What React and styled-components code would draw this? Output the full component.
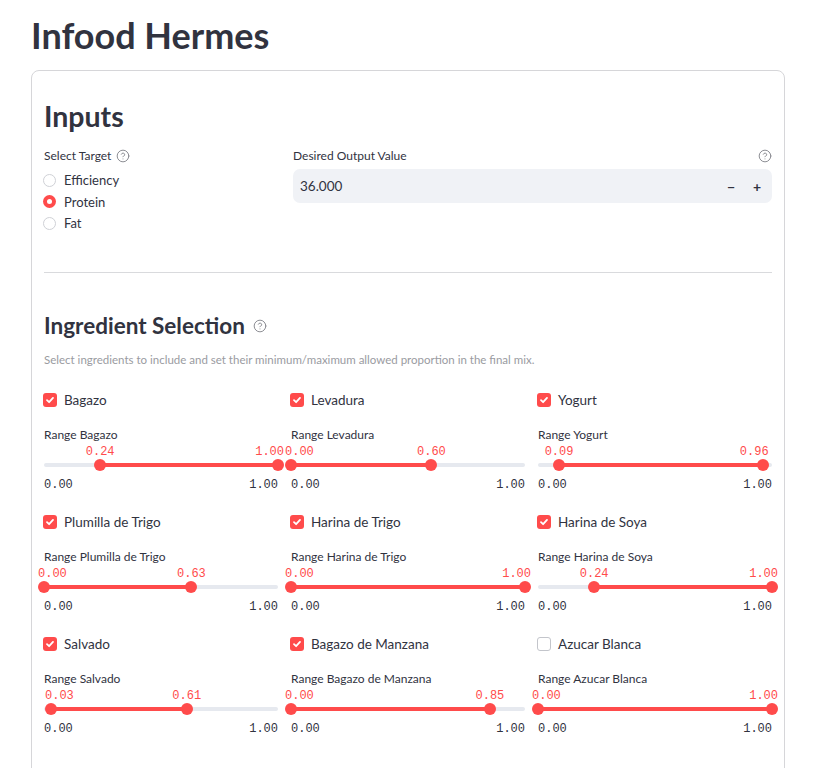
import React from 'react'
import styled, { createGlobalStyle, css } from 'styled-components'
import { CircleHelp } from 'lucide-react'

const GlobalStyle = createGlobalStyle`
  body {
    margin: 0;
    background: #ffffff;
    color: #31333f;
    font-family: Lato, "Noto Sans", sans-serif;
  }
`

const Page = styled.div`
  width: 754px;
  padding: 13px 0 0 31px;
`

const Title = styled.h1`
  margin: 0;
  font-size: 36px;
  line-height: 44px;
  font-weight: 700;
  color: #31333f;
`

const Card = styled.div`
  margin-top: 13px;
  border: 1px solid #d6d6d9;
  border-radius: 8px;
  padding: 12px 12px 40px;
`

const Header = styled.h2`
  margin: 15px 0 0;
  font-size: 28.5px;
  line-height: 36px;
  font-weight: 700;
`

const InputsGrid = styled.div`
  display: grid;
  grid-template-columns: 233fr 479fr;
  gap: 16px;
  margin-top: 14px;
`

const WidgetLabel = styled.div`
  display: flex;
  align-items: center;
  gap: 5px;
  font-size: 12px;
  line-height: 16px;
  height: 16px;

  ${props => props.spread && css`
    justify-content: space-between;
  `}
`

const Help = styled(CircleHelp)`
  color: #84858c;
  flex: none;
`

const RadioList = styled.div`
  margin-top: 5.5px;
  display: flex;
  flex-direction: column;
`

const RadioOption = styled.div`
  display: flex;
  align-items: center;
  height: 21.5px;
  font-size: 13px;
`

const RadioDot = styled.span`
  width: 13px;
  height: 13px;
  box-sizing: border-box;
  border-radius: 50%;
  margin: 0 8px 0 -1px;
  border: 1px solid #cfd1d6;
  background: #ffffff;
  display: flex;
  align-items: center;
  justify-content: center;

  ${props => props.checked && css`
    border: none;
    background: #ff4b4b;
    &::after {
      content: '';
      width: 5px;
      height: 5px;
      border-radius: 50%;
      background: #ffffff;
    }
  `}
`

const NumberBox = styled.div`
  margin-top: 5px;
  height: 34px;
  background: #f0f2f6;
  border-radius: 7px;
  display: flex;
  align-items: center;
  padding: 0 2px 0 7px;
  font-size: 13.5px;
`

const NumberValue = styled.span`
  flex: 1;
`

const StepButton = styled.span`
  width: 26px;
  text-align: center;
  font-size: 14px;
  font-weight: 700;
  color: #31333f;
`

const Divider = styled.hr`
  margin: 38px 0 0;
  border: none;
  border-top: 1px solid #d9dadd;
`

const SubHeader = styled.h3`
  margin: 38px 0 0;
  font-size: 22.5px;
  line-height: 30px;
  font-weight: 700;
  display: flex;
  align-items: center;
  gap: 8px;
`

const Caption = styled.p`
  margin: 11px 0 0;
  font-size: 11.5px;
  line-height: 16px;
  color: #9a9ba1;
`

const IngredientGrid = styled.div`
  margin-top: 21px;
  display: grid;
  grid-template-columns: repeat(3, 1fr);
  column-gap: 13px;
  row-gap: 18px;
`

const Cell = styled.div`
  display: flex;
  flex-direction: column;
`

const CheckRow = styled.label`
  display: flex;
  align-items: center;
  height: 22px;
  font-size: 13.5px;
`

const CheckBox = styled.span`
  width: 14px;
  height: 14px;
  box-sizing: border-box;
  border-radius: 3px;
  margin: 0 7px 0 -1px;
  display: flex;
  align-items: center;
  justify-content: center;
  border: 1px solid #c3c5cb;
  background: #ffffff;

  ${props => props.checked && css`
    border: none;
    background: #ff4b4b;
  `}
`

const SliderLabel = styled.div`
  margin-top: 16px;
  font-size: 12px;
  line-height: 16px;
`

const ValueRow = styled.div`
  position: relative;
  margin-top: 1px;
  height: 15px;
`

const ThumbValue = styled.span`
  position: absolute;
  top: 0;
  font-family: "Liberation Mono", "DejaVu Sans Mono", monospace;
  font-size: 12px;
  line-height: 16px;
  color: #ff4b4b;
  white-space: nowrap;
  transform: translateX(-50%);

  ${props => props.align === 'left' && css`
    transform: translateX(-6px);
  `}
  ${props => props.align === 'right' && css`
    transform: translateX(calc(-100% + 6px));
  `}
`

const Track = styled.div`
  position: relative;
  height: 12px;

  &::before {
    content: '';
    position: absolute;
    left: 0;
    right: 0;
    top: 4px;
    height: 4px;
    border-radius: 2px;
    background: #e6e9ef;
  }
`

const Fill = styled.div`
  position: absolute;
  top: 4px;
  height: 4px;
  background: #ff4b4b;
`

const Thumb = styled.span`
  position: absolute;
  top: 0;
  width: 12px;
  height: 12px;
  border-radius: 50%;
  background: #ff4b4b;
  transform: translateX(-50%);
`

const Ticks = styled.div`
  margin-top: 6px;
  display: flex;
  justify-content: space-between;
  font-family: "Liberation Mono", "DejaVu Sans Mono", monospace;
  font-size: 12px;
  line-height: 16px;
  color: #31333f;
`

const ingredients = [
  { name: 'Bagazo', checked: true, lo: 0.24, hi: 1.0 },
  { name: 'Levadura', checked: true, lo: 0.0, hi: 0.6 },
  { name: 'Yogurt', checked: true, lo: 0.09, hi: 0.96 },
  { name: 'Plumilla de Trigo', checked: true, lo: 0.0, hi: 0.63 },
  { name: 'Harina de Trigo', checked: true, lo: 0.0, hi: 1.0 },
  { name: 'Harina de Soya', checked: true, lo: 0.24, hi: 1.0 },
  { name: 'Salvado', checked: true, lo: 0.03, hi: 0.61 },
  { name: 'Bagazo de Manzana', checked: true, lo: 0.0, hi: 0.85 },
  { name: 'Azucar Blanca', checked: false, lo: 0.0, hi: 1.0 }
]

const targets = [
  { label: 'Efficiency', checked: false },
  { label: 'Protein', checked: true },
  { label: 'Fat', checked: false }
]

// value labels stick to the thumb edge when centring would spill out of the column
const alignFor = v => {
  if (v < 0.062) return 'left'
  if (v > 0.938) return 'right'
  return 'center'
}

const Check = () => (
  <svg width="10" height="10" viewBox="0 0 10 10">
    <path d="M2 5.2 L4.1 7.2 L8 2.9" fill="none" stroke="#ffffff" strokeWidth="1.8" strokeLinecap="round" strokeLinejoin="round" />
  </svg>
)

const RangeSlider = ({ label, lo, hi }) => (
  <>
    <SliderLabel>{label}</SliderLabel>
    <ValueRow>
      <ThumbValue align={alignFor(lo)} style={{ left: `${lo * 100}%` }}>{lo.toFixed(2)}</ThumbValue>
      <ThumbValue align={alignFor(hi)} style={{ left: `${hi * 100}%` }}>{hi.toFixed(2)}</ThumbValue>
    </ValueRow>
    <Track>
      <Fill style={{ left: `${lo * 100}%`, width: `${(hi - lo) * 100}%` }} />
      <Thumb style={{ left: `${lo * 100}%` }} />
      <Thumb style={{ left: `${hi * 100}%` }} />
    </Track>
    <Ticks>
      <span>0.00</span>
      <span>1.00</span>
    </Ticks>
  </>
)

const Ingredient = ({ name, checked, lo, hi }) => (
  <Cell>
    <CheckRow>
      <CheckBox checked={checked}>{checked && <Check />}</CheckBox>
      {name}
    </CheckRow>
    <RangeSlider label={`Range ${name}`} lo={lo} hi={hi} />
  </Cell>
)

export default function App() {
  return (
    <Page>
      <GlobalStyle />
      <Title>Infood Hermes</Title>
      <Card>
        <Header>Inputs</Header>
        <InputsGrid>
          <div>
            <WidgetLabel>
              Select Target <Help size={14} strokeWidth={1.6} />
            </WidgetLabel>
            <RadioList>
              {targets.map(t => (
                <RadioOption key={t.label}>
                  <RadioDot checked={t.checked} />
                  {t.label}
                </RadioOption>
              ))}
            </RadioList>
          </div>
          <div>
            <WidgetLabel spread>
              Desired Output Value <Help size={14} strokeWidth={1.6} />
            </WidgetLabel>
            <NumberBox>
              <NumberValue>36.000</NumberValue>
              <StepButton>−</StepButton>
              <StepButton>+</StepButton>
            </NumberBox>
          </div>
        </InputsGrid>
        <Divider />
        <SubHeader>
          Ingredient Selection <Help size={14} strokeWidth={1.6} />
        </SubHeader>
        <Caption>
          Select ingredients to include and set their minimum/maximum allowed proportion in the final mix.
        </Caption>
        <IngredientGrid>
          {ingredients.map(i => (
            <Ingredient key={i.name} {...i} />
          ))}
        </IngredientGrid>
      </Card>
    </Page>
  )
}
